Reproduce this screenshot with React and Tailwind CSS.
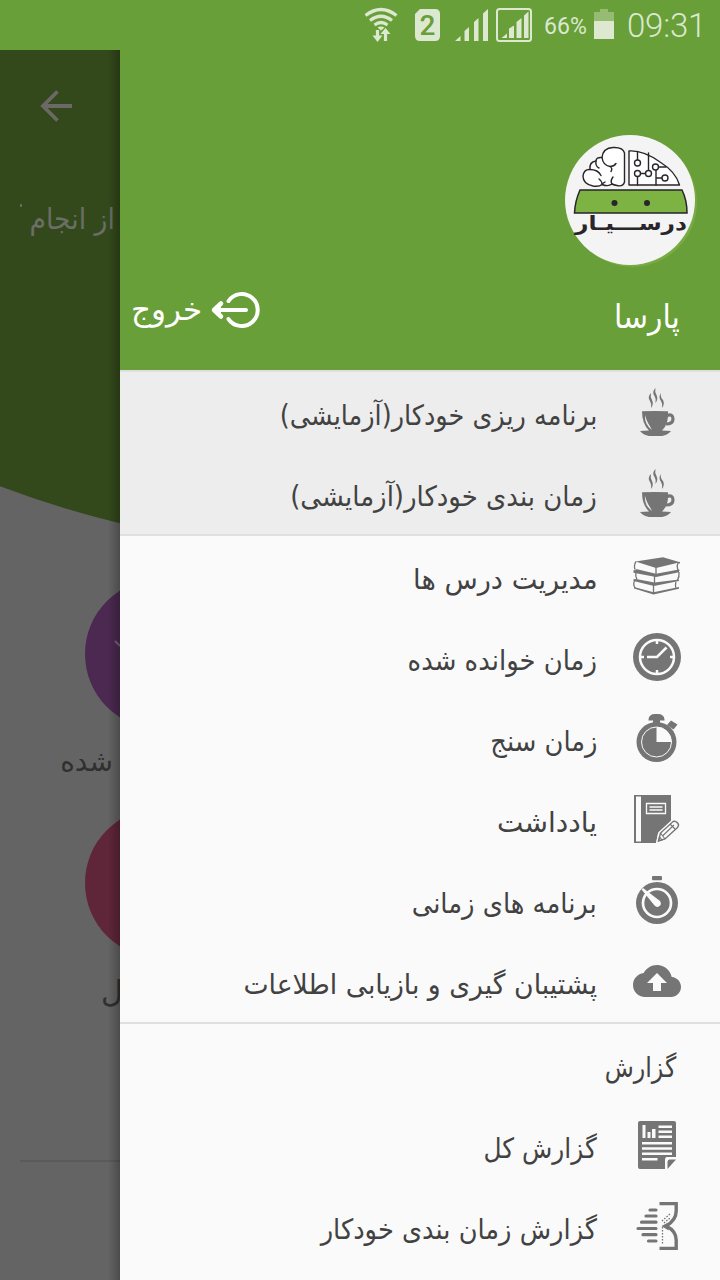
const FONT = "font-['DejaVu_Sans',sans-serif]";

function StatusBar() {
  return (
    <div className="flex h-[50px] shrink-0 items-center bg-[#689f38] pl-[364px] text-[#dce8d0] font-['Roboto',sans-serif]">
      <svg width="34" height="50" viewBox="0 0 34 50" className="shrink-0" fill="none" stroke="currentColor" strokeWidth="3.200">
        <path d="M1.500 15.500Q17 3.500 32.500 15.500" />
        <path d="M6 20.500Q17 12 28 20.500" />
        <path d="M10.500 25Q17 20 23.500 25" />
        <path d="M13.500 27.500q3.500-2 7 0l-3.500 3z" fill="currentColor" stroke="none" />
        <path d="M13.500 30v7M21.500 41v-8" />
        <path d="M8.500 35.500h10l-5 6.500zM16.500 34h10l-5-6z" fill="currentColor" stroke="none" />
      </svg>
      <svg width="25" height="50" viewBox="0 0 25 50" className="ml-[17px] shrink-0">
        <path d="M5 9h15q5 0 5 5v22q0 5-5 5H5q-5 0-5-5V14z" fill="currentColor" />
        <text x="12.500" y="35" textAnchor="middle" fontFamily="Roboto" fontWeight="500" fontSize="28" fill="#689f38">2</text>
      </svg>
      <svg width="33" height="50" viewBox="0 0 33 50" className="ml-[15px] shrink-0" fill="currentColor">
        <path d="M0 41l5.500-5v5zM9.500 31l4.500-4v14H9.500zM19 22l4.500-4v23H19zM28 13.500l5-4.500v32h-5z" />
      </svg>
      <svg width="36" height="50" viewBox="0 0 36 50" className="ml-2 shrink-0" fill="currentColor">
        <rect x="1" y="9" width="34" height="32" rx="2.500" fill="none" stroke="currentColor" strokeWidth="2" />
        <path d="M5.500 38l5.500-4.500V38zM13 28.500l5-3V38h-5zM20.500 22l5-4v20h-5zM28 15.500l4.500-4V38H28z" />
      </svg>
      <span className="ml-3 w-[43px] shrink-0 whitespace-nowrap pt-0.5 text-[24px] leading-none">
        <span className="inline-block origin-left scale-x-[.96]">66%</span>
      </span>
      <svg width="20" height="50" viewBox="0 0 20 50" className="ml-[7px] shrink-0" fill="currentColor">
        <path d="M0 12h6V9h8v3h6v9H0z" opacity=".4" />
        <path d="M0 21h20v18H0z" />
      </svg>
      <span className="ml-[13px] shrink-0 pt-px text-[33px] font-light leading-none tracking-[-0.200px]">09:31</span>
    </div>
  );
}

function Logo() {
  return (
    <svg width="134" height="134" viewBox="0 0 134 134" className="shrink-0">
      <circle cx="67.500" cy="67.500" r="64.500" fill="#79aa43" />
      <circle cx="65" cy="65" r="65" fill="#f4f4f4" />
      <g fill="#fff" stroke="#29252a" strokeWidth="1.400" strokeLinecap="round" strokeLinejoin="round">
        <path d="M59.500 47Q58 52 52 50.500Q49 50 47 49Q43 52 37 49.500Q34 52 28 51Q18 49 18 41Q19 34 25 34.500Q24 27 31 26Q31 22 37 22.500Q38 13 48 12.500Q58 12 59.500 18z" />
        <path d="M25 34.500q8 0 11 6M31 26q-1 5 3 7M37 22.500q1 8 8 9q3 2 1 5M45 31.500q4 0 6-3M34 44q3 2 3 5.500M37 49l3-2M47 49q-2-3 1-7" fill="none" />
        <path d="M64 16Q78 15 95 27Q111 37 114.500 50H64z" />
        <path d="M72.500 17v8M83.500 18v17M72.500 50V41M75 38.500h6M91 50V34.500M93 32h8M91 43h6" fill="none" />
        <circle cx="72.500" cy="28" r="3" /><circle cx="72.500" cy="38.500" r="3" /><circle cx="83.500" cy="38.500" r="3" />
        <circle cx="90.500" cy="32" r="3" /><circle cx="100" cy="43" r="3" />
      </g>
      <path d="M15 55H117Q122 65 122 78H9.500Q10 66 15 55z" fill="#7cb342" stroke="#29252a" strokeWidth="1.500" />
      <circle cx="49.500" cy="68" r="3" fill="#29252a" /><circle cx="82" cy="68" r="3" fill="#29252a" />
      <text x="66" y="94.500" direction="rtl" textAnchor="middle" textLength="112" lengthAdjust="spacingAndGlyphs" fontFamily="DejaVu Sans" fontWeight="700" fontSize="20" fill="#29252a">درســـیـار</text>
    </svg>
  );
}

function Icon({ children }) {
  return <svg width="48" height="48" viewBox="0 0 48 48" className="shrink-0 text-[#757575]" fill="currentColor">{children}</svg>;
}

function Cup() {
  return (
    <Icon>
      <path d="M9 23.300q13-.6 26 0Q36 36 29 42.500l9 .5q-3 4-9 5H16q-6-1-9-5l9-.5Q9 36 9 23.300z" />
      <path d="M34 27.500q6-2 6 3.500 0 5-7 5" fill="none" stroke="currentColor" strokeWidth="3.200" />
      <path d="M12 27q-1 9 7 15-2-4-4-7-2-4-3-8z" fill="#ededed" />
      <path d="M18 5q-4 4-1 8 2 3 1 7 3-4 1-8-2-3-1-7zM22.500 0q-4 4-1 8 2 3 1 7 3-4 1-8-2-3-1-7zM28 5q-3 4 0 8 2 3 1 7 3-4 1-8-3-3-2-7z" />
    </Icon>
  );
}

function Books() {
  return (
    <Icon>
      <path d="M2.500 9.500L30 5.300l17 5-24 5.700z" />
      <g fill="none" stroke="currentColor" strokeWidth="1.300">
        <path d="M3 9.500Q.5 13 2 17.500M23 15v8M47 10.500l-2 .5q-1.500 3 0 7l1.500.5" />
        <path d="M3 20q-1 4 1 7.500M21.500 23.500v7.500M46 20q.5 5-1.500 8" />
        <path d="M2 28q-2.500 4 0 8M20.500 32v9.500M43 30q-1 3 0 6.500" />
      </g>
      <path d="M2 16.800l21 5 23-4.300v1l-23 6-22.500-5v-1.200l3-.3zM.5 19l22 3.500L46 18.500v1.800l-23 4.800-22.500-4.300zM3 27l18.500 3.500L46 27.500v1.500l-25 5L.5 29v-1.700zM1 35l19.500 5.200L46 35v1.700L20.500 42.500 1 36.500z" />
    </Icon>
  );
}

function Clock() {
  return (
    <Icon>
      <circle cx="24" cy="24" r="24" />
      <g fill="none" stroke="#fafafa">
        <circle cx="24" cy="24" r="17" strokeWidth="2.500" />
        <path d="M24 7v4M24 37v4M7 24h4M37 24h4M14 24h10l9.500-9.500" strokeWidth="2.500" />
      </g>
    </Icon>
  );
}

function Stopwatch() {
  return (
    <Icon>
      <path d="M15.500 5.500Q16 0 22 0h3q6 0 6.500 5.500v1H27v4h-7v-4h-4.500zM34 11l4-4.500 6.500 4-4 5z" />
      <circle cx="23.500" cy="28" r="20" />
      <circle cx="23.500" cy="28" r="15" fill="none" stroke="#fafafa" strokeWidth="1" />
      <path d="M23.500 13a15 15 0 0 1 15 15h-15z" fill="#fafafa" />
    </Icon>
  );
}

function Notebook() {
  return (
    <Icon>
      <path d="M1 0h37v26L25 38l-2 10H1z" />
      <path d="M3 1.500h5v45H3z" fill="#fafafa" />
      <path d="M13.500 8.500h19v10h-19zM16.500 12h13M16.500 15h13" fill="none" stroke="#fafafa" strokeWidth="1.300" />
      <path d="M25.500 46l2-8L40 26.500q3-1 5 2 1.500 2-1 4.500L32 44z" fill="#fafafa" stroke="#fafafa" strokeWidth="4" />
      <path d="M25.500 46l2-8L40 26.500q3-1 5 2 1.500 2-1 4.500L32 44z" fill="#fafafa" stroke="#757575" strokeWidth="1.400" />
      <path d="M27.500 38l4.500 6M29.500 41L41 30M37 29l5 5M25.500 46l1-4 2.500 3z" fill="none" stroke="currentColor" strokeWidth="1.100" />
    </Icon>
  );
}

function Timer() {
  return (
    <Icon>
      <rect x="19" y="0" width="10" height="4.300" rx="1" />
      <circle cx="24" cy="27" r="21" />
      <circle cx="24" cy="27" r="14" fill="none" stroke="#fafafa" strokeWidth="2.700" />
      <path d="M8.500 13.500L10 12l17 13q2 3-.5 5t-5-.5z" fill="#fafafa" />
    </Icon>
  );
}

function Cloud() {
  return (
    <Icon>
      <path d="M38.700 20.080C37.340 13.180 31.280 8 24 8c-5.780 0-10.790 3.280-13.300 8.070C4.690 16.720 0 21.810 0 28c0 6.630 5.370 12 12 12h26c5.520 0 10-4.480 10-10 0-5.280-4.110-9.560-9.300-9.920zM28 26v8h-8v-8h-6l10-10 10 10h-6z" />
    </Icon>
  );
}

function Report() {
  return (
    <Icon>
      <path d="M7 0h34q2 0 2 2v34H34q-2 0-2 3v9H7q-2 0-2-2V2q0-2 2-2z" />
      <path d="M9.500 4h3v13h-3zM14.500 11h3v6h-3zM19 8h3.500v9H19zM25.500 4.500H39v2.500H25.500zM25.500 9.500H39V12H25.500zM25.500 14.500H39V17H25.500zM9 21h30v2.500H9zM9 26.200h30v2.500H9zM9 31.500h30V34H9zM9 37h15.500v2.500H9z" fill="#fafafa" />
      <path d="M34.500 48v-7q0-2.500 2-2.500H43z" />
    </Icon>
  );
}

function Hourglass() {
  return (
    <Icon>
      <path d="M26.500 1.600h16.700V9q0 9-10 15 10 5 10 14v8.400H26.500" fill="none" stroke="currentColor" strokeWidth="3.400" />
      <path d="M17 8h6M13 14h10M8.500 20.200h14.500M5 26.500h18M10 32.700h13M15.500 39H23" fill="none" stroke="currentColor" strokeWidth="3.200" strokeLinecap="round" />
      <path d="M29.500 25v17M29 19l8-7M31 21l6-5" fill="none" stroke="currentColor" strokeWidth="1.300" strokeDasharray="1.500 1.500" />
      <path d="M28.500 24l7-3.500v8z" />
    </Icon>
  );
}

function Row({ label, icon: Glyph, scale = "" }) {
  return (
    <div className="flex h-[81px] items-center gap-9 pb-px pr-[39px]">
      <Glyph />
      <span className={`inline-block origin-right whitespace-nowrap pt-2 text-[28px] leading-10 ${scale}`}>{label}</span>
    </div>
  );
}

function Backdrop() {
  return (
    <div className="relative w-[120px] shrink-0 overflow-hidden bg-[#646464] text-[#303030]">
      <div className="absolute left-[-660px] top-[-1538px] h-[2040px] w-[2040px] rounded-full bg-[#33491b]" />
      <svg className="absolute left-10 top-[40px]" width="33" height="32" viewBox="0 0 33 32" fill="none" stroke="#6b6966" strokeWidth="3.800">
        <path d="M32 16H3M17.500 1.500L3 16l14.500 14.500" />
      </svg>
      <span className="absolute left-5 top-[154px] h-[3px] w-[2px] bg-[#666b5e]" />
      <span className="absolute right-[5px] top-[149px] origin-right scale-x-[.92] whitespace-nowrap text-[29px] leading-10 text-[#6b6e66]">از انجام</span>
      <div className="absolute left-[85px] top-[529px] h-[150px] w-[150px] rounded-full bg-[#4c2951]" />
      <svg className="absolute left-[114px] top-[590px]" width="6" height="8" viewBox="0 0 6 8"><path d="M1 1l5 5" stroke="#77687a" strokeWidth="2" /></svg>
      <span className="absolute right-[7px] top-[692px] origin-right whitespace-nowrap text-[28px] leading-10">شده</span>
      <div className="absolute left-[85px] top-[758px] h-[150px] w-[150px] rounded-full bg-[#5f2639]" />
      <span className="absolute left-[101px] top-[922px] whitespace-nowrap text-[30px] leading-10">ل</span>
      <div className="absolute left-5 right-0 top-[1110px] h-[2px] bg-[#5a5a5a]" />
      <div className="absolute inset-y-0 right-0 w-3 bg-linear-to-l from-black/25 to-transparent" />
    </div>
  );
}

export default function App() {
  return (
    <div dir="ltr" className={`flex h-[1280px] w-[720px] flex-col overflow-hidden ${FONT}`}>
      <StatusBar />
      <div className="flex min-h-0 grow">
        <Backdrop />
        <aside dir="rtl" className="flex w-[600px] flex-col overflow-hidden bg-[#fafafa] text-[#424242]">
          <header className="flex h-80 shrink-0 flex-col bg-[#689f38] pt-[85px] text-white">
            <div className="flex h-[134px] pr-[21px]"><Logo /></div>
            <div className="flex justify-between pl-[11px] pr-10 pt-4">
              <span className="inline-block origin-right scale-x-[.905] pt-2 text-[33px] leading-[48px]">پارسا</span>
              <div className="flex items-start gap-2">
                <svg className="mt-[6px]" width="50" height="38" viewBox="0 0 50 38" fill="none" stroke="currentColor" strokeWidth="4" strokeLinecap="round" strokeLinejoin="round">
                  <path d="M18.500 10a16 16 0 1 1 0 18M36 19H5" />
                  <path d="M11 12.500L4 19l7 6.500" strokeWidth="4.500" />
                  <path d="M10 15.500L5 19l5 3.500z" fill="currentColor" strokeWidth="1" />
                </svg>
                <span className="inline-block origin-left text-[31px] leading-[48px]">خروج</span>
              </div>
            </div>
          </header>
          <section className="shrink-0 border-y-2 border-[#dfdfdf] bg-[#ededed]">
            <Row icon={Cup} scale="scale-x-[.912]" label="برنامه ریزی خودکار(آزمایشی)" />
            <Row icon={Cup} scale="scale-x-[.927]" label="زمان بندی خودکار(آزمایشی)" />
          </section>
          <section className="shrink-0 border-b-2 border-[#dfdfdf]">
            <Row icon={Books} scale="scale-x-[.973]" label="مدیریت درس ها" />
            <Row icon={Clock} scale="scale-x-[.924]" label="زمان خوانده شده" />
            <Row icon={Stopwatch} scale="scale-x-[.92]" label="زمان سنج" />
            <Row icon={Notebook} label="یادداشت" />
            <Row icon={Timer} scale="scale-x-[.922]" label="برنامه های زمانی" />
            <Row icon={Cloud} scale="scale-x-[.953]" label="پشتیبان گیری و بازیابی اطلاعات" />
          </section>
          <section className="shrink-0">
            <h2 className="flex h-[81px] items-center pr-11 pt-1.5 text-[28px] leading-10"><span className="inline-block origin-right scale-x-[.85]">گزارش</span></h2>
            <Row icon={Report} scale="scale-x-[.886]" label="گزارش کل" />
            <Row icon={Hourglass} scale="scale-x-[.918]" label="گزارش زمان بندی خودکار" />
          </section>
        </aside>
      </div>
    </div>
  );
}
